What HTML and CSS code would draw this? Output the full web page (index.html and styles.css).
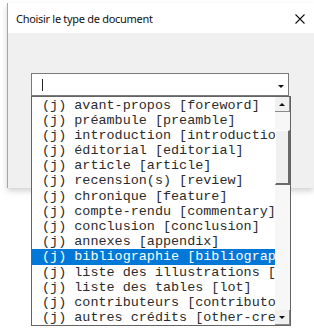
FILE: index.html
```html
<!DOCTYPE html>
<html lang="fr">
<head>
    <meta charset="UTF-8">
    <title>Choisir le type de document</title>
    <link rel="stylesheet" href="styles.css">
</head>
<body>
    <div class="dialog">
        <div class="titlebar">
            <span class="title">Choisir le type de document</span>
            <svg class="close" width="10" height="10" viewBox="0 0 10 10">
                <path d="M0.5 0.5 L9.5 9.5 M9.5 0.5 L0.5 9.5" stroke="#111" stroke-width="1.1" fill="none"/>
            </svg>
        </div>
        <div class="dialog-body">
            <div class="combo">
                <div class="combo-field">
                    <span class="caret"></span>
                    <span class="combo-arrow"></span>
                </div>
                <!-- liste deroulante ouverte -->
                <div class="listbox">
                    <ul class="items">
                        <li>(j) avant-propos [foreword]</li>
                        <li>(j) préambule [preamble]</li>
                        <li>(j) introduction [introduction]</li>
                        <li>(j) éditorial [editorial]</li>
                        <li>(j) article [article]</li>
                        <li>(j) recension(s) [review]</li>
                        <li>(j) chronique [feature]</li>
                        <li>(j) compte-rendu [commentary]</li>
                        <li>(j) conclusion [conclusion]</li>
                        <li>(j) annexes [appendix]</li>
                        <li class="selected">(j) bibliographie [bibliography]</li>
                        <li>(j) liste des illustrations [lof]</li>
                        <li>(j) liste des tables [lot]</li>
                        <li>(j) contributeurs [contributors]</li>
                        <li>(j) autres crédits [other-credits]</li>
                    </ul>
                    <div class="scrollbar">
                        <div class="sb-btn"><span class="tri-up"></span></div>
                        <div class="sb-track">
                            <div class="sb-thumb"></div>
                        </div>
                        <div class="sb-btn"><span class="tri-down"></span></div>
                    </div>
                </div>
            </div>
        </div>
    </div>
</body>
</html>
```

FILE: styles.css
```css
html {
    height: 100%;
}
body {
    margin: 0;
    min-height: 332px;
    background-color: #fff;
    font-family: "Noto Sans", "Open Sans", sans-serif;
}
.dialog {
    margin: 3px 0 0 7px;
    width: 306px;
    border-left: 1px solid #a6a6a6;
    box-shadow: 0 3px 6px rgba(0,0,0,0.18);
}
.titlebar {
    height: 30px;
    background-color: #fff;
    display: flex;
    align-items: center;
    justify-content: space-between;
    padding: 0 9px 0 8px;
}
.title {
    font-size: 11px;
    letter-spacing: -0.3px;
    color: #111;
    margin-top: 1px;
}
.close {
    margin-top: 1px;
}
.dialog-body {
    height: 155px;
    background-color: #f0f0f0;
    padding: 40px 0 0 23px;
    box-sizing: border-box;
}
.combo {
    position: relative;
    width: 258px;
}
.combo-field {
    height: 23px;
    box-sizing: border-box;
    border: 1px solid #7a7a7a;
    background-color: #fff;
    display: flex;
    align-items: center;
    justify-content: space-between;
    padding: 0 3px 0 10px;
}
.caret {
    width: 1px;
    height: 12px;
    background-color: #222;
}
.combo-arrow {
    width: 0;
    height: 0;
    margin: 3px 1px 0 0;
    border-left: 3px solid transparent;
    border-right: 3px solid transparent;
    border-top: 3px solid #111;
}
.listbox {
    position: absolute;
    top: 23px;
    left: 0;
    width: 260px;
    height: 230px;
    box-sizing: border-box;
    border: 1px solid #646464;
    background-color: #fff;
    display: flex;
    z-index: 5;
}
.items {
    list-style: none;
    margin: 0;
    padding: 0.5px 0 0 0;
    flex: 1;
    overflow: hidden;
}
.items li {
    height: 15.2px;
    line-height: 15.2px;
    padding-left: 10px;
    white-space: nowrap;
    font-family: "Liberation Mono", "Courier New", monospace;
    font-size: 13.45px;
    color: #2b2b2b;
}
.items li.selected {
    background-color: #0078d7;
    color: #fff;
}
.scrollbar {
    width: 15px;
    display: flex;
    flex-direction: column;
    background-color: #f7f7f7;
}
.sb-btn {
    height: 15px;
    box-sizing: border-box;
    background-color: #f0f0f0;
    border-right: 1px solid #8a8a8a;
    border-bottom: 1px solid #8a8a8a;
    display: flex;
    align-items: center;
    justify-content: center;
}
.tri-up {
    width: 0;
    height: 0;
    border-left: 3px solid transparent;
    border-right: 3px solid transparent;
    border-bottom: 3px solid #111;
}
.tri-down {
    width: 0;
    height: 0;
    border-left: 3px solid transparent;
    border-right: 3px solid transparent;
    border-top: 3px solid #111;
}
.sb-track {
    flex: 1;
    padding-top: 18px;
}
.sb-thumb {
    height: 55px;
    box-sizing: border-box;
    background-color: #f0f0f0;
    border-top: 1px solid #fff;
    border-left: 1px solid #fff;
    border-right: 2px solid #696969;
    border-bottom: 2px solid #696969;
}
```
